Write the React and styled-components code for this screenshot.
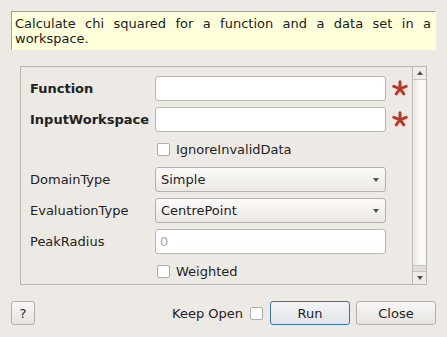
import React from "react";
import styled, { createGlobalStyle } from "styled-components";

const Global = createGlobalStyle`
  html, body { margin: 0; padding: 0; background: #edeae6; }
  body { font-family: "DejaVu Sans", "Liberation Sans", sans-serif; font-size: 13px; color: #1e1e1e; }
  * { box-sizing: border-box; }
`;

const Window = styled.div`
  width: 447px;
  height: 337px;
  padding: 11px 11px 12px 11px;
  display: flex;
  flex-direction: column;
  background: #edeae6;
  overflow: hidden;
`;

const Description = styled.p`
  margin: 0;
  height: 39px;
  padding: 4px 4px 0 3px;
  background: #ffffdc;
  border-top: 1px solid #a19d98;
  border-left: 1px solid #a19d98;
  border-right: 1px solid #ffffff;
  border-bottom: 1px solid #ffffff;
  text-align: justify;
  line-height: 15px;
  color: #1a1a1a;
`;

const Frame = styled.div`
  margin: 16px 9px 0 9px;
  height: 219px;
  border: 1px solid #b9b5b0;
  display: flex;
  overflow: hidden;
`;

const Content = styled.div`
  flex: 1;
  padding: 9px 0 0 9px;
  display: grid;
  grid-template-columns: 125px 231px 1fr;
  grid-auto-rows: auto;
  row-gap: 6px;
  align-content: start;
  align-items: center;
`;

const Label = styled.div`
  font-weight: ${(p) => (p.$bold ? "bold" : "normal")};
  grid-column: 1;
  white-space: nowrap;
  color: #222;
`;

const TextInput = styled.div`
  grid-column: 2;
  height: 25px;
  background: #fff;
  border: 1px solid #bab5b0;
  border-radius: 3px;
  padding: 0 4px;
  display: flex;
  align-items: center;
  color: ${(p) => (p.$placeholder ? "#a8a5a1" : "#1e1e1e")};
`;

const Combo = styled.div`
  grid-column: 2;
  height: 25px;
  background: linear-gradient(#fcfbfa, #ebe8e4);
  border: 1px solid #b4afaa;
  border-radius: 3px;
  padding: 0 6px 0 5px;
  display: flex;
  align-items: center;
  justify-content: space-between;
  color: #1e1e1e;
`;

const DownArrow = styled.span`
  width: 0;
  height: 0;
  border-left: 3.5px solid transparent;
  border-right: 3.5px solid transparent;
  border-top: 4px solid #505050;
`;

const UpArrow = styled.span`
  width: 0;
  height: 0;
  border-left: 3.5px solid transparent;
  border-right: 3.5px solid transparent;
  border-bottom: 4px solid #505050;
`;

const CheckRow = styled.div`
  grid-column: 2 / span 2;
  height: 23px;
  display: flex;
  align-items: center;
  gap: 6px;
  padding-left: 2px;
`;

const Box = styled.span`
  width: 13px;
  height: 13px;
  background: #fff;
  border: 1px solid #b0aca7;
  border-radius: 2px;
  flex: none;
`;

const StarCell = styled.div`
  grid-column: 3;
  display: flex;
  align-items: center;
  padding-left: 6px;
  padding-bottom: 2px;
  height: 25px;
`;

const ScrollBar = styled.div`
  width: 14px;
  border-left: 1px solid #bdb9b4;
  display: flex;
  flex-direction: column;
  flex: none;
`;

const ScrollButton = styled.div`
  height: 13px;
  display: flex;
  align-items: center;
  justify-content: center;
  background: #eeebe8;
  border-${(p) => (p.$top ? "bottom" : "top")}: 1px solid #c9c5c0;
  flex: none;
`;

const Handle = styled.div`
  height: 185px;
  background: linear-gradient(to right, #e9e7e4, #fbfbfa 60%, #f6f5f3);
  flex: none;
`;

const Trough = styled.div`
  flex: 1;
  background: #e0ddd9;
  border-top: 1px solid #cbc7c2;
`;

const Footer = styled.div`
  margin-top: 16px;
  height: 24px;
  display: flex;
  align-items: center;
`;

const Button = styled.button`
  font: inherit;
  height: 24px;
  width: ${(p) => p.$w || 80}px;
  margin-left: ${(p) => p.$ml || 0}px;
  padding: 0;
  border-radius: 3px;
  color: #1e1e1e;
  border: 1px solid ${(p) => (p.$default ? "#3d74a6" : "#b3aea9")};
  background: ${(p) =>
    p.$default
      ? "linear-gradient(#f3f4f6, #e0e4e8)"
      : "linear-gradient(#f8f7f6, #e7e4e0)"};
  display: flex;
  align-items: center;
  justify-content: center;
`;

const Spacer = styled.div`
  flex: 1;
`;

const KeepLabel = styled.span`
  margin-right: 7px;
  color: #222;
`;

const FooterBox = styled(Box)`
  margin-right: 7px;
`;

const Star = () => (
  <svg width="16" height="16" viewBox="0 0 16 16">
    <g stroke="#b8392b" strokeWidth="3" strokeLinecap="round">
      <line x1="8" y1="8.6" x2="8" y2="1.8" />
      <line x1="8" y1="8.6" x2="14.2" y2="6.4" />
      <line x1="8" y1="8.6" x2="11.8" y2="13.8" />
      <line x1="8" y1="8.6" x2="4.2" y2="13.8" />
      <line x1="8" y1="8.6" x2="1.8" y2="6.4" />
    </g>
  </svg>
);

export default function App() {
  return (
    <>
      <Global />
      <Window>
        <Description>
          Calculate chi squared for a function and a data set in a workspace.
        </Description>
        <Frame>
          <Content>
            <Label $bold>Function</Label>
            <TextInput />
            <StarCell>
              <Star />
            </StarCell>

            <Label $bold>InputWorkspace</Label>
            <TextInput />
            <StarCell>
              <Star />
            </StarCell>

            <CheckRow>
              <Box />
              <span>IgnoreInvalidData</span>
            </CheckRow>

            <Label>DomainType</Label>
            <Combo>
              <span>Simple</span>
              <DownArrow />
            </Combo>
            <span />

            <Label>EvaluationType</Label>
            <Combo>
              <span>CentrePoint</span>
              <DownArrow />
            </Combo>
            <span />

            <Label>PeakRadius</Label>
            <TextInput $placeholder>0</TextInput>
            <span />

            <CheckRow>
              <Box />
              <span>Weighted</span>
            </CheckRow>
          </Content>
          <ScrollBar>
            <ScrollButton $top>
              <UpArrow />
            </ScrollButton>
            <Handle />
            <Trough />
            <ScrollButton>
              <DownArrow />
            </ScrollButton>
          </ScrollBar>
        </Frame>
        <Footer>
          <Button $w={24}>?</Button>
          <Spacer />
          <KeepLabel>Keep Open</KeepLabel>
          <FooterBox />
          <Button $default>Run</Button>
          <Button $ml={6}>Close</Button>
        </Footer>
      </Window>
    </>
  );
}
